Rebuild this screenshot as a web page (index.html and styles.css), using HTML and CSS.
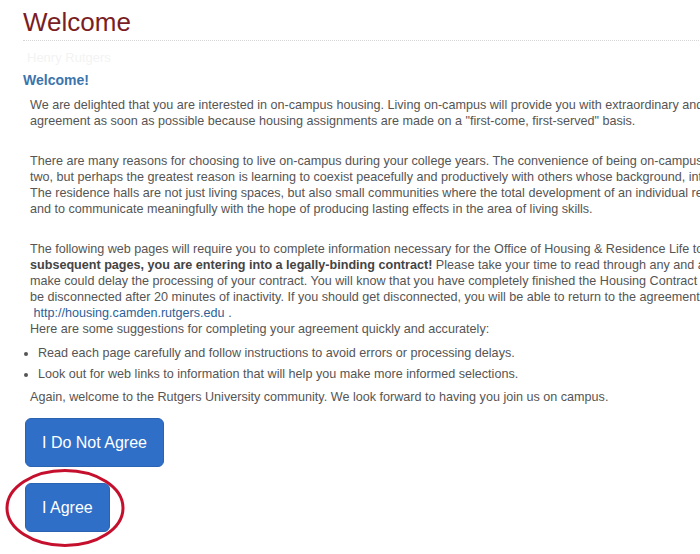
FILE: index.html
```html
<!DOCTYPE html>
<html lang="en">
<head>
    <meta charset="UTF-8">
    <meta name="viewport" content="width=device-width, initial-scale=1.0">
    <title>Welcome</title>
    <link rel="stylesheet" href="styles.css">
</head>
<body>
    <div class="page">
        <h1 class="page-title">Welcome</h1>
        <div class="student-name">Henry Rutgers</div>
        <h3 class="intro-title">Welcome!</h3>

        <p class="para">We are delighted that you are interested in on-campus housing. Living on-campus will provide you with extraordinary and unique opportunities for personal growth. We encourage you to complete your<br>
        agreement as soon as possible because housing assignments are made on a "first-come, first-served" basis.</p>

        <p class="para">There are many reasons for choosing to live on-campus during your college years. The convenience of being on-campus and close to classes and campus resources are just one or<br>
        two, but perhaps the greatest reason is learning to coexist peacefully and productively with others whose background, interests and values may differ from your own.<br>
        The residence halls are not just living spaces, but also small communities where the total development of an individual resident is encouraged, to learn to live with others<br>
        and to communicate meaningfully with the hope of producing lasting effects in the area of living skills.</p>

        <p class="para last">The following web pages will require you to complete information necessary for the Office of Housing &amp; Residence Life to process your housing agreement. By continuing on to the<br>
        <strong>subsequent pages, you are entering into a legally-binding contract!</strong> Please take your time to read through any and all information carefully, as any errors you<br>
        make could delay the processing of your contract. You will know that you have completely finished the Housing Contract when you receive a confirmation. Your session will<br>
        be disconnected after 20 minutes of inactivity. If you should get disconnected, you will be able to return to the agreement by logging back in at<br>
        <a class="link" href="#">&nbsp;http://housing.camden.rutgers.edu</a> .<br>
        Here are some suggestions for completing your agreement quickly and accurately:</p>

        <ul class="tips">
            <li>Read each page carefully and follow instructions to avoid errors or processing delays.</li>
            <li>Look out for web links to information that will help you make more informed selections.</li>
        </ul>

        <p class="para closing">Again, welcome to the Rutgers University community. We look forward to having you join us on campus.</p>

        <div class="actions">
            <button class="btn" type="button">I Do Not Agree</button>
            <div class="btn-wrap">
                <button class="btn" type="button">I Agree</button>
                <svg class="circle-mark" width="124" height="82" viewBox="0 0 124 82">
                    <ellipse cx="61" cy="40" rx="58" ry="37.5" fill="none" stroke="#c5102d" stroke-width="3"/>
                </svg>
            </div>
        </div>
    </div>
</body>
</html>
```

FILE: styles.css
```css
* {
    padding: 0;
    margin: 0;
    box-sizing: border-box;
}
body {
    font-family: "Liberation Sans", Arial, sans-serif;
    background: #fff;
    overflow: hidden;
    height: 554px;
}
.page {
    width: 1100px;
    padding-left: 23px;
}
.page-title {
    font-size: 26px;
    line-height: 29px;
    font-weight: normal;
    color: #7a1d24;
    padding-top: 8px;
    padding-bottom: 3px;
    border-bottom: 1px dotted #d6d6d6;
    width: 700px;
}
.student-name {
    font-size: 13px;
    line-height: 18px;
    color: #f3f3f3;
    padding-left: 4px;
    margin-top: 8px;
}
.intro-title {
    font-size: 14px;
    line-height: 18px;
    color: #3b74ad;
    margin-top: 4px;
}
.para {
    font-size: 12.6px;
    line-height: 16px;
    color: #555;
    padding-left: 7px;
    white-space: nowrap;
    margin-top: 8px;
    margin-bottom: 24px;
}
.para + .para {
    margin-top: 0;
}
.para strong {
    color: #444;
}
.para.last {
    margin-bottom: 0;
}
.link {
    color: #2c5f98;
    text-decoration: none;
}
.tips {
    font-size: 12.6px;
    line-height: 16px;
    color: #555;
    padding-left: 15px;
    margin: 8px 0 7px;
}
.tips li + li {
    margin-top: 5px;
}
.para.closing {
    margin: 0;
}
.actions {
    display: flex;
    flex-direction: column;
    align-items: flex-start;
    gap: 16px;
    margin-top: 13px;
    padding-left: 2px;
}
.btn {
    font-family: "Liberation Sans", Arial, sans-serif;
    font-size: 16px;
    height: 49px;
    padding: 0 16px;
    color: #fff;
    background-color: #2f6fc8;
    border: 1px solid #2a63b2;
    border-radius: 6px;
    cursor: pointer;
}
.btn-wrap {
    position: relative;
}
.circle-mark {
    position: absolute;
    left: -21px;
    top: -15px;
    pointer-events: none;
}
```
